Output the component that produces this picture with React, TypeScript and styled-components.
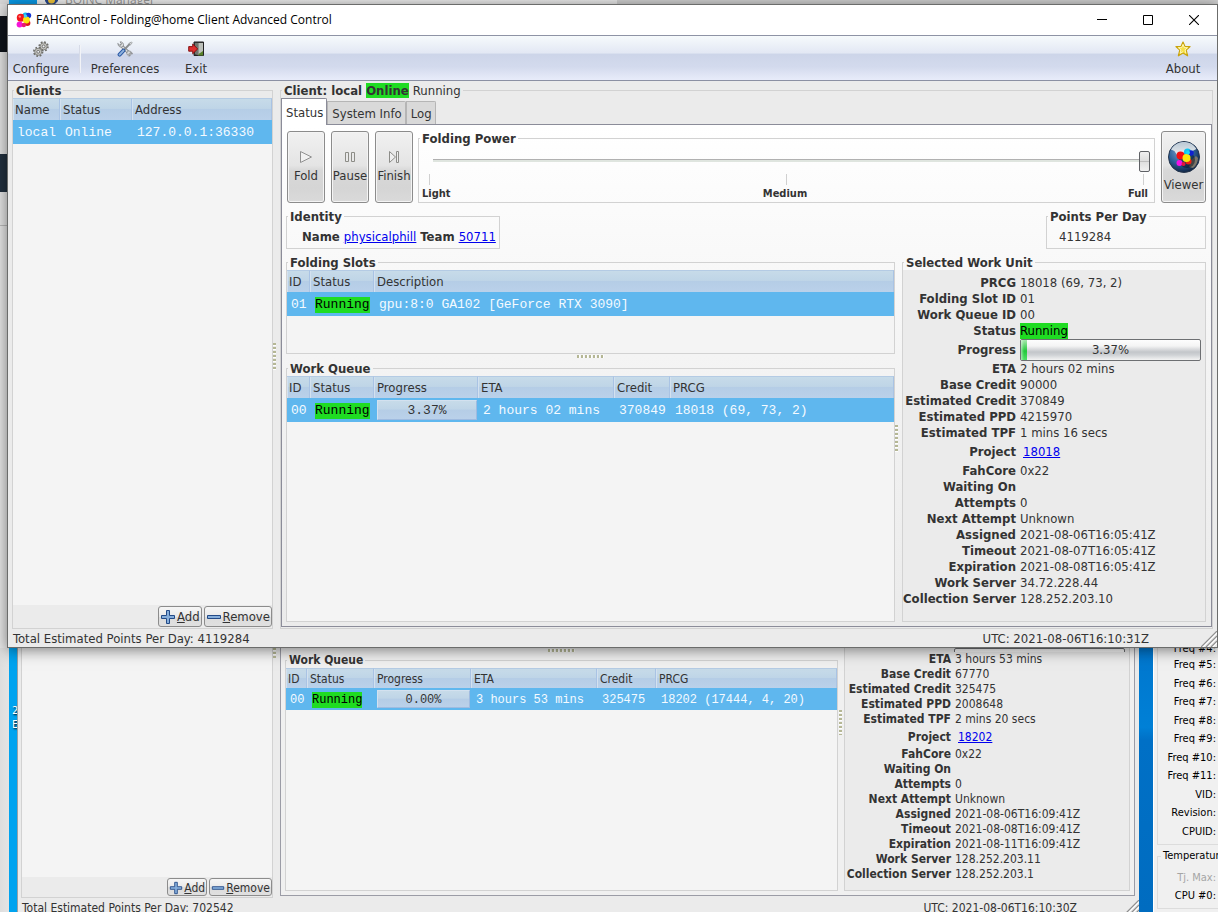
import React from 'react';
import styled, { createGlobalStyle, css } from 'styled-components';

const GlobalStyle = createGlobalStyle`
  *, *::before, *::after { box-sizing: border-box; }
  body {
    margin: 0;
    font-family: "DejaVu Sans Condensed", "DejaVu Sans", sans-serif;
    font-stretch: condensed;
    font-size: 13px;
    line-height: 16px;
    color: #333;
  }
  button, input { font: inherit; color: inherit; margin: 0; padding: 0; }
`;

const mono = css`
  font-family: "Liberation Mono", monospace;
`;
const titleFont = css`
  font-family: "Open Sans", "Noto Sans", sans-serif;
  font-stretch: normal;
`;
const blueHeader = css`
  background: linear-gradient(#c7dbe9, #bfd5e7 45%, #b5cde6 50%, #bad1ea);
`;

/* ---------- desktop ---------- */

const Desktop = styled.div`
  height: 100vh;
  display: flex;
  flex-direction: column;
  overflow: hidden;
  background: #e4e4e4;
`;

const TopStrip = styled.div`
  height: 4px;
  flex: none;
  display: flex;
  align-items: flex-end;
  gap: 7px;
  overflow: hidden;
  background: linear-gradient(90deg, #d8d8d8 9px, #0a9be8 9px, #0a9be8 37px, #f2f2f2 37px, #ececec 617px, #d2d2d2 617px);
  padding-left: 45px;
`;
const StripTitle = styled.span`
  ${titleFont}
  font-size: 12px;
  line-height: 8px;
  color: #999;
`;
const StripIcon = styled.svg`
  flex: none;
`;

const MainRow = styled.div`
  flex: 1;
  min-height: 0;
  display: flex;
  position: relative;
  z-index: 1;
`;
const LeftEdge = styled.div`
  width: 7px;
  flex: none;
  background: linear-gradient(
    #e0e0e0 12px, #0f141b 12px, #0f141b 48px, #e4e4e4 48px, #e4e4e4 150px,
    #22303f 150px, #22303f 188px, #e6e6e6 188px, #e6e6e6 221px, #bbb 221px, #bbb 222px, #e8e8e8 222px);
`;

const Window = styled.main`
  flex: 1;
  min-width: 0;
  display: flex;
  flex-direction: column;
  border: 1px solid #6b6c6b;
  background: #ebebeb;
  box-shadow: 0 2px 14px rgba(0, 0, 0, 0.5);
`;

const TitleBar = styled.header`
  ${titleFont}
  height: 30px;
  flex: none;
  display: flex;
  align-items: center;
  background: #fff;
  color: #000;
  font-size: 12px;
  padding-left: 8px;
`;
const Title = styled.h1`
  flex: 1;
  margin: 0 0 0 4px;
  font-size: 12px;
  font-weight: 400;
`;
const WindowButton = styled.button`
  width: 46px;
  height: 30px;
  display: grid;
  place-items: center;
  border: 0;
  background: none;
`;

const Toolbar = styled.nav`
  height: 46px;
  flex: none;
  display: flex;
  align-items: stretch;
  border-top: 1px solid #8e93a5;
  border-bottom: 1px solid #8b90a3;
  background: linear-gradient(#f6fafc, #e3e8f4 38%, #cdd5e9 42%, #d3daed 70%, #e8ecfa);
  padding: 0 8px 0 4px;
`;
const ToolButton = styled.button<{ $width: number }>`
  width: ${p => p.$width}px;
  display: flex;
  flex-direction: column;
  align-items: center;
  gap: 4px;
  padding-top: 5px;
  border: 0;
  background: none;
`;
const ToolSeparator = styled.div`
  width: 2px;
  margin: 9px 8px 7px 9px;
  background: linear-gradient(90deg, #c9cfdf, #fff);
`;
const Spacer = styled.div`
  flex: 1;
`;

const Body = styled.div`
  flex: 1;
  min-height: 0;
  display: flex;
  padding: 2px 4px 0;
`;

/* ---------- shared parts ---------- */

const Frame = styled.fieldset`
  min-width: 0;
  min-height: 0;
  margin: 0;
  padding: 0;
  border: 1px solid #d2d2d2;
  display: flex;
  flex-direction: column;
`;
const Legend = styled.legend<{ $small?: boolean }>`
  margin-left: 1px;
  padding: 0 2px;
  height: 15px;
  line-height: 15px;
  font-size: ${p => (p.$small ? 12 : 13)}px;
  font-weight: 700;
  white-space: nowrap;
`;
const Tag = styled.span`
  display: inline-block;
  background: #1fdc22;
  color: #000;
`;
const LegendTag = styled(Tag)`
  color: #333;
`;
const LegendNote = styled.span`
  font-weight: 400;
`;

const ClientsFrame = styled(Frame)`
  width: 261px;
  flex: none;
`;
const TreeArea = styled.div`
  flex: 1;
  min-height: 0;
  background: #f4f4f4;
`;
const ActionRow = styled.div<{ $small?: boolean }>`
  display: flex;
  justify-content: flex-end;
  gap: 2px;
  padding: 1px 0;
  height: ${p => (p.$small ? 20 : 23)}px;
  flex: none;
  background: #ebebeb;
`;
const ActionButton = styled.button<{ $small?: boolean }>`
  display: flex;
  align-items: center;
  gap: 1px;
  padding: 1px 1px 0;
  font-size: ${p => (p.$small ? 12 : 13)}px;
  line-height: 16px;
  border: 1px solid #8c8c8c;
  border-radius: 3px;
  background: linear-gradient(#f6f6f6, #e9e9e9 50%, #dcdcdc 52%, #e0e0e0);
`;

const Table = styled.table<{ $small?: boolean }>`
  width: 100%;
  table-layout: fixed;
  border-collapse: separate;
  border-spacing: 0;
  font-size: ${p => (p.$small ? 12 : 13)}px;

  th {
    ${blueHeader}
    height: ${p => (p.$small ? 20 : 22)}px;
    padding: 0 0 0 3px;
    text-align: left;
    font-weight: 400;
    border-right: 1px solid #a9c3e4;
    border-top: 1px solid #b4cbe4;
    box-shadow: inset 1px 0 #d3e1ef;
    white-space: nowrap;
  }
  th:first-child { padding-left: 2px; }
  td {
    ${mono}
    height: ${p => (p.$small ? 22 : 24)}px;
    padding: 2px 0 0 5px;
    background: #5fb7ee;
    color: #f4faff;
    white-space: pre;
  }
  td:first-child { padding-left: 4px; }
`;
const ProgressTd = styled.td`
  && { padding: 2px 1px 2px 3px; }
`;
const CellBar = styled.div<{ $small?: boolean }>`
  ${blueHeader}
  height: ${p => (p.$small ? 18 : 20)}px;
  line-height: ${p => (p.$small ? 18 : 20)}px;
  padding-top: 2px;
  border: 1px solid #9fbbe0;
  border-left-color: #d3e1ef;
  border-top-color: #d3e1ef;
  color: #333;
  display: flex;
  align-items: center;
  justify-content: center;
`;

const VSplit = styled.div`
  width: 7px;
  flex: none;
  display: flex;
  align-items: center;
`;
const HSplit = styled.div`
  height: 7px;
  flex: none;
  display: flex;
  justify-content: center;
  align-items: flex-start;
  padding-top: 1px;
`;
const GripV = styled.div<{ $length?: number }>`
  width: 3px;
  height: ${p => p.$length ?? 27}px;
  background: repeating-linear-gradient(#b5b795 0 2px, #fff 2px 3px, transparent 3px 4px);
`;
const GripH = styled.div`
  width: 27px;
  height: 3px;
  background: repeating-linear-gradient(90deg, #b5b795 0 2px, #fff 2px 3px, transparent 3px 4px);
`;

/* ---------- notebook ---------- */

const ClientFrame = styled(Frame)`
  flex: 1;
  padding-bottom: 1px;
`;
const Tabs = styled.div`
  height: 26px;
  flex: none;
  display: flex;
  align-items: flex-end;
`;
const Tab = styled.button<{ $active?: boolean }>`
  position: relative;
  height: ${p => (p.$active ? 27 : 23)}px;
  margin-bottom: ${p => (p.$active ? -1 : 0)}px;
  padding: 2px 3px 0 4px;
  border: 1px solid ${p => (p.$active ? '#8b8c99' : '#b5b5b5')};
  border-bottom: 0;
  border-top-right-radius: 2px;
  background: ${p => (p.$active ? '#fff' : '#d9d9d9')};
`;
const Page = styled.section`
  flex: 1;
  min-height: 0;
  display: flex;
  flex-direction: column;
  gap: 6px;
  border: 1px solid #8b8c99;
  padding: 6px 5px 4px 4px;
  background: linear-gradient(#fff, #f3f3f3 50%, #ebebeb);
`;
const ControlRow = styled.div`
  height: 72px;
  flex: none;
  display: flex;
  gap: 6px;
  padding-left: 1px;
`;
const BigButton = styled.button<{ $width: number; $top: number }>`
  width: ${p => p.$width}px;
  flex: none;
  display: flex;
  flex-direction: column;
  align-items: center;
  gap: 4px;
  padding-top: ${p => p.$top}px;
  border: 1px solid #8c8c8c;
  border-radius: 3px;
  box-shadow: inset 0 0 0 1px #f4f4f4;
  background: linear-gradient(#f1f1f1, #e4e4e4 48%, #d8d8d8 55%, #d5d5d5 80%, #dadada);
`;
const PowerFrame = styled(Frame)`
  flex: 1;
  margin-left: -1px;
`;
const Range = styled.input`
  appearance: none;
  flex: none;
  height: 22px;
  margin: 4px 4px 0 14px;
  background: linear-gradient(transparent 9px, #b0b0b0 9px, #b0b0b0 10px, #dfe5df 10px, #dfe5df 12px, transparent 12px);
  &::-webkit-slider-thumb {
    appearance: none;
    width: 11px;
    height: 21px;
    border: 1px solid #5f6165;
    border-radius: 2px;
    background: linear-gradient(#f0f0f0, #dedede 45%, #bdbdbd 50%, #e0e0e0 55%, #f0f0f0);
  }
`;
const Ticks = styled.div`
  display: flex;
  justify-content: space-between;
  padding: 0 10px;
  margin-top: 2px;
`;
const Tick = styled.span`
  width: 1px;
  height: 11px;
  background: #d0d0d0;
`;
const Marks = styled.div`
  display: grid;
  grid-template-columns: 1fr auto 1fr;
  padding: 1px 6px 0 3px;
  font-size: 11px;
  line-height: 16px;
  font-weight: 700;
`;
const Mark = styled.span<{ $end?: boolean }>`
  text-align: ${p => (p.$end ? 'right' : 'left')};
`;

const InfoRow = styled.div`
  height: 40px;
  flex: none;
  display: flex;
  justify-content: space-between;
`;
const IdentityFrame = styled(Frame)`
  width: 214px;
`;
const IdentityLine = styled.div`
  display: flex;
  gap: 4px;
  padding: 5px 0 0 15px;
  white-space: nowrap;
`;
const PointsFrame = styled(Frame)`
  width: 160px;
`;
const PointsValue = styled.div`
  padding: 5px 0 0 12px;
`;
const Link = styled.a`
  color: #0000ee;
  text-decoration: underline;
`;
const BoldLabel = styled.span`
  font-weight: 700;
`;

const Details = styled.div`
  flex: 1;
  min-height: 0;
  display: flex;
`;
const Lists = styled.div`
  flex: 1;
  min-width: 0;
  display: flex;
  flex-direction: column;
`;
const SlotsFrame = styled(Frame)`
  height: 99px;
  flex: none;
`;
const QueueFrame = styled(Frame)`
  flex: 1;
`;
const UnitFrame = styled(Frame)`
  width: 304px;
  flex: none;
`;
const UnitList = styled.dl<{ $small?: boolean }>`
  flex: 1;
  margin: 0;
  padding: ${p => (p.$small ? '0 4px 0 0' : '5px 4px 0 0')};
  background: #ebebeb;
  font-size: ${p => (p.$small ? 12 : 13)}px;
`;
const UnitRow = styled.div<{ $height: number; $label: number }>`
  display: grid;
  grid-template-columns: ${p => p.$label}px 1fr;
  column-gap: 4px;
  align-items: center;
  height: ${p => p.$height}px;
  line-height: ${p => Math.min(p.$height, 16)}px;
  white-space: nowrap;
  dt { font-weight: 700; justify-self: end; }
  dd { margin: 0; }
`;
const ProjectLink = styled(Link)`
  margin-left: 3px;
`;
const Bar = styled.div`
  position: relative;
  height: 22px;
  border: 1px solid #6d6f72;
  border-radius: 2px;
  background: linear-gradient(#fdfdfd, #f4f4f4 30%, #c3c6ca 60%, #cfd2d5 75%, #f4f4f4);
  text-align: center;
  line-height: 20px;
  overflow: hidden;
`;
const BarFill = styled.div`
  position: absolute;
  inset: 0 auto 0 0;
  background: linear-gradient(90deg, rgba(255,255,255,.5), transparent 50%), linear-gradient(#a6e8ac, #22c83a 55%, #4fe065);
`;
const BarText = styled.span`
  position: relative;
`;

const StatusBar = styled.footer<{ $small?: boolean }>`
  height: 18px;
  flex: none;
  display: flex;
  padding-left: ${p => (p.$small ? 4 : 5)}px;
  font-size: ${p => (p.$small ? 12 : 13)}px;
  line-height: 20px;
`;
const Clock = styled.span<{ $right: number }>`
  margin: 0 ${p => p.$right}px 0 auto;
`;
const ResizeGrip = styled.svg`
  align-self: flex-end;
  flex: none;
`;

/* ---------- windows behind ---------- */

const BackRow = styled.div`
  height: 264px;
  flex: none;
  display: flex;
  overflow: hidden;
`;
const GreyEdge = styled.div`
  width: 9px;
  flex: none;
  background: linear-gradient(90deg, #dedede, #e4e4e4);
`;
const BlueEdge = styled.div`
  width: 8px;
  flex: none;
  padding: 56px 0 0 3px;
  overflow: hidden;
  background: #00a3ef;
  color: #fff;
  font-size: 11px;
  line-height: 14px;
  text-shadow: 1px 1px 2px #000;
`;
const BlueGap = styled.div`
  width: 14px;
  flex: none;
  background: linear-gradient(#0076cd, #0080d6 30%, #0070c6 35%, #006cc0);
`;
const BackWindow = styled.section`
  flex: 1;
  min-width: 0;
  display: flex;
  flex-direction: column;
  border-left: 1px solid #9aa0a4;
  background: #ebebeb;
  overflow: hidden;
`;
const BackBody = styled.div`
  height: 250px;
  flex: none;
  display: flex;
  padding: 0 4px 0 3px;
`;
const BackClients = styled.div`
  width: 252px;
  flex: none;
  display: flex;
  flex-direction: column;
  border: 1px solid #d2d2d2;
  border-top: 0;
`;
const BackSplit = styled(VSplit)`
  align-items: flex-start;
`;
const BackPage = styled.div`
  flex: 1;
  min-width: 0;
  display: flex;
  margin-bottom: 2px;
  padding: 0 4px 4px;
  border: 1px solid #9b9ca6;
  border-top: 0;
  background: #f0f0f0;
`;
const BackLists = styled(Lists)`
  padding-top: 1px;
`;
const BackHSplit = styled(HSplit)`
  height: 4px;
  padding-top: 0;
`;
const BackSplitMid = styled(VSplit)`
  width: 6px;
  padding-left: 1px;
  align-items: flex-start;
  padding-top: 62px;
`;
const BackUnit = styled.div`
  width: 286px;
  flex: none;
  display: flex;
  flex-direction: column;
  border: 1px solid #d2d2d2;
  border-top: 0;
`;
const ClippedRow = styled.div`
  height: 4px;
  flex: none;
  display: grid;
  grid-template-columns: 106px 1fr;
  column-gap: 3px;
  align-items: end;
  overflow: hidden;
  padding-right: 4px;
  background: #ebebeb;
`;

const SensorPanel = styled.aside`
  width: 65px;
  flex: none;
  padding-left: 3px;
  overflow: hidden;
  border-left: 1px solid #fff;
  background: #f0f0f0;
  color: #000;
  font-size: 11px;
`;
const SensorGroup = styled.div`
  height: 197px;
  padding-right: 2px;
  border: 1px solid #dcdcdc;
  border-width: 0 0 1px 1px;
  display: flex;
  flex-direction: column;
`;
const SensorClipped = styled.div`
  height: 8px;
  flex: none;
  line-height: 2px;
  text-align: right;
  overflow: hidden;
`;
const SensorRows = styled.div`
  height: 185px;
  display: grid;
  grid-auto-rows: 1fr;
  align-items: center;
  justify-items: end;
`;
const TempGroup = styled(Frame)`
  height: 60px;
  margin-top: 4px;
  border-right: 0;
  border-color: #dcdcdc;
`;
const TempLegend = styled.legend`
  margin-left: 3px;
  padding: 0 2px;
  line-height: 14px;
`;
const TempRows = styled.div`
  padding: 6px 2px 0 0;
  text-align: right;
`;
const TempRow = styled.div<{ $dim?: boolean }>`
  line-height: 18px;
  color: ${p => (p.$dim ? '#a5a5a5' : '#000')};
`;

/* ---------- icons ---------- */

const Molecule = () => (
  <svg width="16" height="16" viewBox="0 0 16 16" aria-hidden="true">
    <circle cx="9.5" cy="3.4" r="3" fill="#12b9ee" />
    <circle cx="12.4" cy="3.6" r="2.8" fill="#1537d2" />
    <circle cx="11.4" cy="11" r="3" fill="#e0161c" />
    <circle cx="4.8" cy="5.8" r="4" fill="#f4161a" />
    <circle cx="10.4" cy="8" r="3.4" fill="#fbe30c" />
    <circle cx="9.4" cy="4" r="1.8" fill="#3fd0f6" />
    <circle cx="3.6" cy="12.6" r="3" fill="#f514d8" />
    <circle cx="7.8" cy="13" r="2.2" fill="#e81b70" />
    <circle cx="3.8" cy="4.6" r="1.2" fill="#ff8b86" />
  </svg>
);

const Gear = ({ x, y }: { x: number; y: number }) => (
  <g transform={`translate(${x} ${y})`}>
    <circle r="4.2" fill="none" stroke="#6f6f6b" strokeWidth="2" strokeDasharray="1.7 1.6" />
    <circle r="3.5" fill="#c4c4c0" stroke="#777772" strokeWidth=".8" />
    <circle r="1.4" fill="#eef1f5" stroke="#6a6a66" strokeWidth=".9" />
  </g>
);
const GearsIcon = () => (
  <svg width="16" height="16" viewBox="0 0 16 16" aria-hidden="true">
    <Gear x={10.6} y={5.4} />
    <Gear x={5.2} y={10.8} />
  </svg>
);

const ToolsIcon = () => (
  <svg width="16" height="16" viewBox="0 0 16 16" aria-hidden="true" strokeLinecap="round" strokeLinejoin="round">
    <path d="M4 4.4 13 13" stroke="#85888a" strokeWidth="3.2" />
    <path d="M4 4.4 13 13" stroke="#dfe1e2" strokeWidth="1.4" />
    <path d="M1 2.8 3 4.6 4.7 3 3 .9A3 3 0 0 1 6.3 5 3 3 0 0 1 1 2.8z" fill="#dcdedf" stroke="#85888a" strokeWidth=".8" />
    <path d="M15.2 12.6 13.2 11.6 11.6 13.2 12.8 15.1A3 3 0 0 1 10 11 3 3 0 0 1 15.2 12.6z" fill="#dcdedf" stroke="#85888a" strokeWidth=".8" />
    <path d="M7 9 13 2.6" stroke="#8a8d8f" strokeWidth="2" />
    <path d="M12 2.6 14.4.9 15.2 1.8 13.4 4z" fill="#d6d8d9" stroke="#85888a" strokeWidth=".6" />
    <path d="M2.6 13.6 6.4 9.6" stroke="#2c5aa5" strokeWidth="4" />
    <path d="M2.6 13.6 6.4 9.6" stroke="#8fb2dd" strokeWidth="2" />
  </svg>
);

const ExitIcon = () => (
  <svg width="16" height="16" viewBox="0 0 16 16" aria-hidden="true">
    <path d="M6 1h9.5v13.5H6z" fill="#3a3d3a" stroke="#222" />
    <path d="M10 2h5v11l-5 1z" fill="#bcc0ba" />
    <path d="M7 2h3.6v12.6L7 13z" fill="#6f746d" />
    <path d="m10.6 13 4.4-3v4.4h-4.6z" fill="#58812a" />
    <path d="M.7 5.6h4V3l5 4.9-5 4.9v-2.6h-4z" fill="#dd2f2f" stroke="#7e0808" strokeWidth=".9" />
  </svg>
);

const StarIcon = () => (
  <svg width="18" height="16" viewBox="0 0 18 17" aria-hidden="true">
    <path
      d="M9 1.2 11.2 6h5.3l-4.1 3.7 1.5 6L9 12.8l-4.9 2.9 1.5-6L1.5 6h5.3z"
      fill="#f6e04a" stroke="#c8a20c" strokeWidth="1.3" strokeLinejoin="round"
    />
    <path d="M9 3.6 10.5 7.1h3.4l-2.7 2.3.8 3.6" fill="none" stroke="#fff8bd" strokeWidth="1" />
    <path d="M9 3.6 7.5 7.1H4.1l2.7 2.3-.8 3.6L9 11.4" fill="none" stroke="#fff8bd" strokeWidth="1" />
  </svg>
);

const FoldIcon = () => (
  <svg width="14" height="14" viewBox="0 0 14 14" aria-hidden="true">
    <path d="M1.5 1.5v11L12.5 7z" fill="#f1f1f1" stroke="#909090" />
  </svg>
);
const PauseIcon = () => (
  <svg width="14" height="14" viewBox="0 0 14 14" aria-hidden="true" fill="#e9e9e9" stroke="#8c8c86">
    <path d="M2.5 2.5h3v9h-3zM8.5 2.5h3v9h-3z" />
  </svg>
);
const FinishIcon = () => (
  <svg width="14" height="14" viewBox="0 0 14 14" aria-hidden="true" fill="#efefef" stroke="#8c8c88">
    <path d="M2.5 1.5v11L8.5 7zM9.5 1.5h2v11h-2z" />
  </svg>
);

const GlobeIcon = () => (
  <svg width="32" height="32" viewBox="0 0 32 32" aria-hidden="true">
    <defs>
      <radialGradient id="ocean" cx=".4" cy=".3" r=".75">
        <stop offset="0" stopColor="#7fa8cf" />
        <stop offset=".55" stopColor="#2d5f98" />
        <stop offset="1" stopColor="#0c1e3a" />
      </radialGradient>
      <linearGradient id="ice" x1="0" y1="0" x2="0" y2="1">
        <stop offset="0" stopColor="#b9c7d4" />
        <stop offset="1" stopColor="#eef0f1" />
      </linearGradient>
    </defs>
    <circle cx="16" cy="16" r="15.5" fill="url(#ocean)" stroke="#27364c" />
    <path d="M3 8.5C7 2 13 .7 17 .9c5 .3 9 3 11.4 7l-4 2-3 5-6 .5-6-1-3-4.5z" fill="url(#ice)" />
    <path d="M23 19l5-4 2 2c0 4-2 8-5 10l-4-1z" fill="#7c7568" />
    <circle cx="19" cy="19" r="8" fill="#06101f" opacity=".5" />
    <circle cx="19.5" cy="11" r="3.6" fill="#0fc4f0" />
    <circle cx="23" cy="12" r="2.8" fill="#1020cf" />
    <circle cx="20.5" cy="20.5" r="3" fill="#f02010" />
    <circle cx="12.5" cy="14.5" r="4" fill="#f40f10" />
    <circle cx="18.5" cy="17" r="4" fill="#fbe70a" />
    <circle cx="20" cy="11.5" r="2" fill="#18d9f5" />
    <circle cx="11.5" cy="22" r="3" fill="#f50fe6" />
    <circle cx="15.5" cy="23" r="2" fill="#e3163c" />
  </svg>
);

const AddIcon = ({ size }: { size: number }) => (
  <svg width={size} height={size} viewBox="0 0 16 16" aria-hidden="true">
    <path d="M6.5 1.5h3v5h5v3h-5v5h-3v-5h-5v-3h5z" fill="#86aedb" stroke="#234a87" />
  </svg>
);
const RemoveIcon = ({ size }: { size: number }) => (
  <svg width={size} height={size} viewBox="0 0 16 16" aria-hidden="true">
    <path d="M1.5 6.5h13v3h-13z" fill="#86aedb" stroke="#234a87" />
  </svg>
);

const Grip = () => (
  <ResizeGrip width="16" height="16" viewBox="0 0 16 16" aria-hidden="true">
    <path d="M0 16 16 0M5 16 16 5M10 16l6-6" stroke="#8d8d8d" strokeWidth="1.2" />
    <path d="M2 16 16 2M7 16l9-9M12 16l4-4" stroke="#fff" strokeWidth="1" />
  </ResizeGrip>
);

/* ---------- pieces with data ---------- */

interface QueueItem {
  id: string;
  progress: string;
  eta: string;
  credit: string;
  prcg: string;
}

const WorkQueue = ({ item, widths, small }: { item: QueueItem; widths: number[]; small?: boolean }) => (
  <QueueFrame>
    <Legend $small={small}>Work Queue</Legend>
    <TreeArea>
      <Table $small={small}>
        <colgroup>
          {widths.map((w, i) => <col key={i} width={w} />)}
          <col />
        </colgroup>
        <thead>
          <tr><th>ID</th><th>Status</th><th>Progress</th><th>ETA</th><th>Credit</th><th>PRCG</th></tr>
        </thead>
        <tbody>
          <tr>
            <td>{item.id}</td>
            <td><Tag>Running</Tag></td>
            <ProgressTd><CellBar $small={small}>{item.progress}</CellBar></ProgressTd>
            <td>{item.eta}</td>
            <td>{item.credit}</td>
            <td>{item.prcg}</td>
          </tr>
        </tbody>
      </Table>
    </TreeArea>
  </QueueFrame>
);

const ListActions = ({ small }: { small?: boolean }) => (
  <ActionRow $small={small}>
    <ActionButton $small={small}><AddIcon size={small ? 14 : 16} /><span><u>A</u>dd</span></ActionButton>
    <ActionButton $small={small}><RemoveIcon size={small ? 14 : 16} /><span><u>R</u>emove</span></ActionButton>
  </ActionRow>
);

const ProgressBar = ({ value, label }: { value: number; label?: string }) => (
  <Bar role="progressbar" aria-label="Progress" aria-valuenow={value}>
    <BarFill style={{ width: `${value}%` }} />
    {label && <BarText>{label}</BarText>}
  </Bar>
);

const unitRows: [string, React.ReactNode, number?][] = [
  ['PRCG', '18018 (69, 73, 2)'],
  ['Folding Slot ID', '01'],
  ['Work Queue ID', '00'],
  ['Status', <Tag>Running</Tag>],
  ['Progress', <ProgressBar value={3.37} label="3.37%" />, 22],
  ['ETA', '2 hours 02 mins'],
  ['Base Credit', '90000'],
  ['Estimated Credit', '370849'],
  ['Estimated PPD', '4215970'],
  ['Estimated TPF', '1 mins 16 secs'],
  ['Project', <ProjectLink href="#18018">18018</ProjectLink>, 22],
  ['FahCore', '0x22'],
  ['Waiting On', ''],
  ['Attempts', '0'],
  ['Next Attempt', 'Unknown'],
  ['Assigned', '2021-08-06T16:05:41Z'],
  ['Timeout', '2021-08-07T16:05:41Z'],
  ['Expiration', '2021-08-08T16:05:41Z'],
  ['Work Server', '34.72.228.44'],
  ['Collection Server', '128.252.203.10'],
];

const backUnitRows: [string, React.ReactNode, number?][] = [
  ['ETA', '3 hours 53 mins'],
  ['Base Credit', '67770'],
  ['Estimated Credit', '325475'],
  ['Estimated PPD', '2008648'],
  ['Estimated TPF', '2 mins 20 secs'],
  ['Project', <ProjectLink href="#18202">18202</ProjectLink>, 20],
  ['FahCore', '0x22'],
  ['Waiting On', ''],
  ['Attempts', '0'],
  ['Next Attempt', 'Unknown'],
  ['Assigned', '2021-08-06T16:09:41Z'],
  ['Timeout', '2021-08-08T16:09:41Z'],
  ['Expiration', '2021-08-11T16:09:41Z'],
  ['Work Server', '128.252.203.11'],
  ['Collection Server', '128.252.203.1'],
];

const sensors = ['Freq #5:', 'Freq #6:', 'Freq #7:', 'Freq #8:', 'Freq #9:', 'Freq #10:', 'Freq #11:', 'VID:', 'Revision:', 'CPUID:'];

export default function App() {
  return (
    <>
      <GlobalStyle />
      <Desktop>
        <TopStrip>
          <StripIcon width="13" height="4" viewBox="0 0 13 4" aria-hidden="true">
            <path d="M0 0h13v1l-3 3H2L0 1z" fill="#2a4a8e" />
            <circle cx="6.5" cy="0" r="3.5" fill="#f5c83a" />
          </StripIcon>
          <StripTitle>BOINC Manager</StripTitle>
        </TopStrip>

        <MainRow>
          <LeftEdge />
          <Window>
            <TitleBar>
              <Molecule />
              <Title>FAHControl - Folding@home Client Advanced Control</Title>
              <WindowButton aria-label="Minimize">
                <svg width="10" height="10" viewBox="0 0 10 10"><path d="M0 4.5h10" stroke="#000" /></svg>
              </WindowButton>
              <WindowButton aria-label="Maximize">
                <svg width="10" height="10" viewBox="0 0 10 10"><path d="M.5.5h9v9h-9z" fill="none" stroke="#000" /></svg>
              </WindowButton>
              <WindowButton aria-label="Close">
                <svg width="10" height="10" viewBox="0 0 10 10"><path d="m0 0 10 10M10 0 0 10" stroke="#000" strokeWidth="1.1" /></svg>
              </WindowButton>
            </TitleBar>

            <Toolbar>
              <ToolButton $width={58}><GearsIcon />Configure</ToolButton>
              <ToolSeparator />
              <ToolButton $width={72}><ToolsIcon />Preferences</ToolButton>
              <ToolButton $width={70}><ExitIcon />Exit</ToolButton>
              <Spacer />
              <ToolButton $width={52}><StarIcon />About</ToolButton>
            </Toolbar>

            <Body>
              <ClientsFrame>
                <Legend>Clients</Legend>
                <TreeArea>
                  <Table>
                    <colgroup><col width={47} /><col width={72} /><col /></colgroup>
                    <thead><tr><th>Name</th><th>Status</th><th>Address</th></tr></thead>
                    <tbody><tr><td>local</td><td>Online</td><td>127.0.0.1:36330</td></tr></tbody>
                  </Table>
                </TreeArea>
                <ListActions />
              </ClientsFrame>

              <VSplit><GripV /></VSplit>

              <ClientFrame>
                <Legend>Client: local <LegendTag>Online</LegendTag> <LegendNote>Running</LegendNote></Legend>
                <Tabs role="tablist">
                  <Tab $active role="tab" aria-selected="true">Status</Tab>
                  <Tab role="tab" aria-selected="false">System Info</Tab>
                  <Tab role="tab" aria-selected="false">Log</Tab>
                </Tabs>
                <Page>
                  <ControlRow>
                    <BigButton $width={38} $top={18}><FoldIcon />Fold</BigButton>
                    <BigButton $width={38} $top={18}><PauseIcon />Pause</BigButton>
                    <BigButton $width={38} $top={18}><FinishIcon />Finish</BigButton>
                    <PowerFrame>
                      <Legend>Folding Power</Legend>
                      <Range type="range" min={0} max={100} defaultValue={100} aria-label="Folding Power" />
                      <Ticks><Tick /><Tick /><Tick /></Ticks>
                      <Marks><Mark>Light</Mark><Mark>Medium</Mark><Mark $end>Full</Mark></Marks>
                    </PowerFrame>
                    <BigButton $width={45} $top={9}><GlobeIcon />Viewer</BigButton>
                  </ControlRow>

                  <InfoRow>
                    <IdentityFrame>
                      <Legend>Identity</Legend>
                      <IdentityLine>
                        <BoldLabel>Name</BoldLabel>
                        <Link href="#user">physicalphill</Link>
                        <BoldLabel>Team</BoldLabel>
                        <Link href="#team">50711</Link>
                      </IdentityLine>
                    </IdentityFrame>
                    <PointsFrame>
                      <Legend>Points Per Day</Legend>
                      <PointsValue>4119284</PointsValue>
                    </PointsFrame>
                  </InfoRow>

                  <Details>
                    <Lists>
                      <SlotsFrame>
                        <Legend>Folding Slots</Legend>
                        <TreeArea>
                          <Table>
                            <colgroup><col width={23} /><col width={64} /><col /></colgroup>
                            <thead><tr><th>ID</th><th>Status</th><th>Description</th></tr></thead>
                            <tbody><tr><td>01</td><td><Tag>Running</Tag></td><td>gpu:8:0 GA102 [GeForce RTX 3090]</td></tr></tbody>
                          </Table>
                        </TreeArea>
                      </SlotsFrame>
                      <HSplit><GripH /></HSplit>
                      <WorkQueue
                        widths={[23, 64, 104, 136, 56]}
                        item={{ id: '00', progress: '3.37%', eta: '2 hours 02 mins', credit: '370849', prcg: '18018 (69, 73, 2)' }}
                      />
                    </Lists>
                    <VSplit><GripV /></VSplit>
                    <UnitFrame>
                      <Legend>Selected Work Unit</Legend>
                      <UnitList>
                        {unitRows.map(([label, value, height]) => (
                          <UnitRow key={label} $height={height ?? 16} $label={113}>
                            <dt>{label}</dt><dd>{value}</dd>
                          </UnitRow>
                        ))}
                      </UnitList>
                    </UnitFrame>
                  </Details>
                </Page>
              </ClientFrame>
            </Body>

            <StatusBar>
              <span>Total Estimated Points Per Day: 4119284</span>
              <Clock $right={52}>UTC: 2021-08-06T16:10:31Z</Clock>
              <Grip />
            </StatusBar>
          </Window>
        </MainRow>

        <BackRow>
          <GreyEdge />
          <BlueEdge>2<br />E</BlueEdge>
          <BackWindow>
            <BackBody>
              <BackClients>
                <TreeArea />
                <ListActions small />
              </BackClients>
              <BackSplit><GripV $length={10} /></BackSplit>
              <BackPage>
                <BackLists>
                  <BackHSplit><GripH /></BackHSplit>
                  <WorkQueue
                    small
                    widths={[21, 67, 97, 126, 59]}
                    item={{ id: '00', progress: '0.00%', eta: '3 hours 53 mins', credit: '325475', prcg: '18202 (17444, 4, 20)' }}
                  />
                </BackLists>
                <BackSplitMid><GripV $length={25} /></BackSplitMid>
                <BackUnit>
                  <ClippedRow><span /><ProgressBar value={0} /></ClippedRow>
                  <UnitList $small>
                    {backUnitRows.map(([label, value, height]) => (
                      <UnitRow key={label} $height={height ?? 15} $label={106}>
                        <dt>{label}</dt><dd>{value}</dd>
                      </UnitRow>
                    ))}
                  </UnitList>
                </BackUnit>
              </BackPage>
            </BackBody>
            <StatusBar $small>
              <span>Total Estimated Points Per Day: 702542</span>
              <Clock $right={46}>UTC: 2021-08-06T16:10:30Z</Clock>
              <Grip />
            </StatusBar>
          </BackWindow>
          <BlueGap />
          <SensorPanel>
            <SensorGroup>
              <SensorClipped>Freq #4:</SensorClipped>
              <SensorRows>{sensors.map(s => <span key={s}>{s}</span>)}</SensorRows>
            </SensorGroup>
            <TempGroup>
              <TempLegend>Temperature</TempLegend>
              <TempRows>
                <TempRow $dim>Tj. Max:</TempRow>
                <TempRow>CPU #0:</TempRow>
              </TempRows>
            </TempGroup>
          </SensorPanel>
        </BackRow>
      </Desktop>
    </>
  );
}
